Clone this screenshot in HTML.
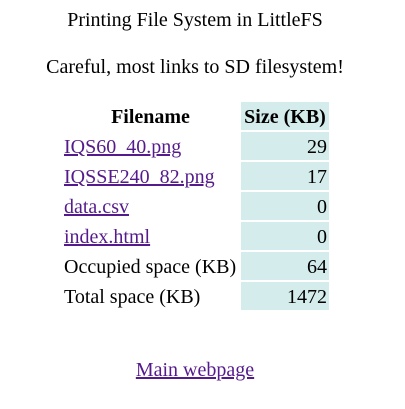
<!DOCTYPE html>
<html><head><style>
body{margin:0;width:405px;height:409px;background:#fff;font-family:"Liberation Serif",serif;font-size:20px;color:#000;position:relative}
.c{position:absolute;left:0;width:390px;text-align:center;line-height:22px}
table{position:absolute;left:60px;top:100px;border-spacing:2px;border-collapse:separate}
td,th{height:26px;padding:2px 2px 0 2px;line-height:26px;white-space:nowrap}
th{font-weight:bold}
td.s,th.s{background:#d5ecec;text-align:right;width:84px}
th.s{text-align:center}
td.f{width:173px}
th.f{text-align:center}
a{color:#551a8b;text-decoration:underline}
</style></head><body>
<div class="c" style="top:9px">Printing File System in LittleFS</div>
<div class="c" style="top:56px">Careful, most links to SD filesystem!</div>
<table>
<tr><th class="f">Filename</th><th class="s">Size (KB)</th></tr>
<tr><td class="f"><a>IQS60_40.png</a></td><td class="s">29</td></tr>
<tr><td class="f"><a>IQSSE240_82.png</a></td><td class="s">17</td></tr>
<tr><td class="f"><a>data.csv</a></td><td class="s">0</td></tr>
<tr><td class="f"><a>index.html</a></td><td class="s">0</td></tr>
<tr><td class="f">Occupied space (KB)</td><td class="s">64</td></tr>
<tr><td class="f">Total space (KB)</td><td class="s">1472</td></tr>
</table>
<div class="c" style="top:359px"><a>Main webpage</a></div>
</body></html>
